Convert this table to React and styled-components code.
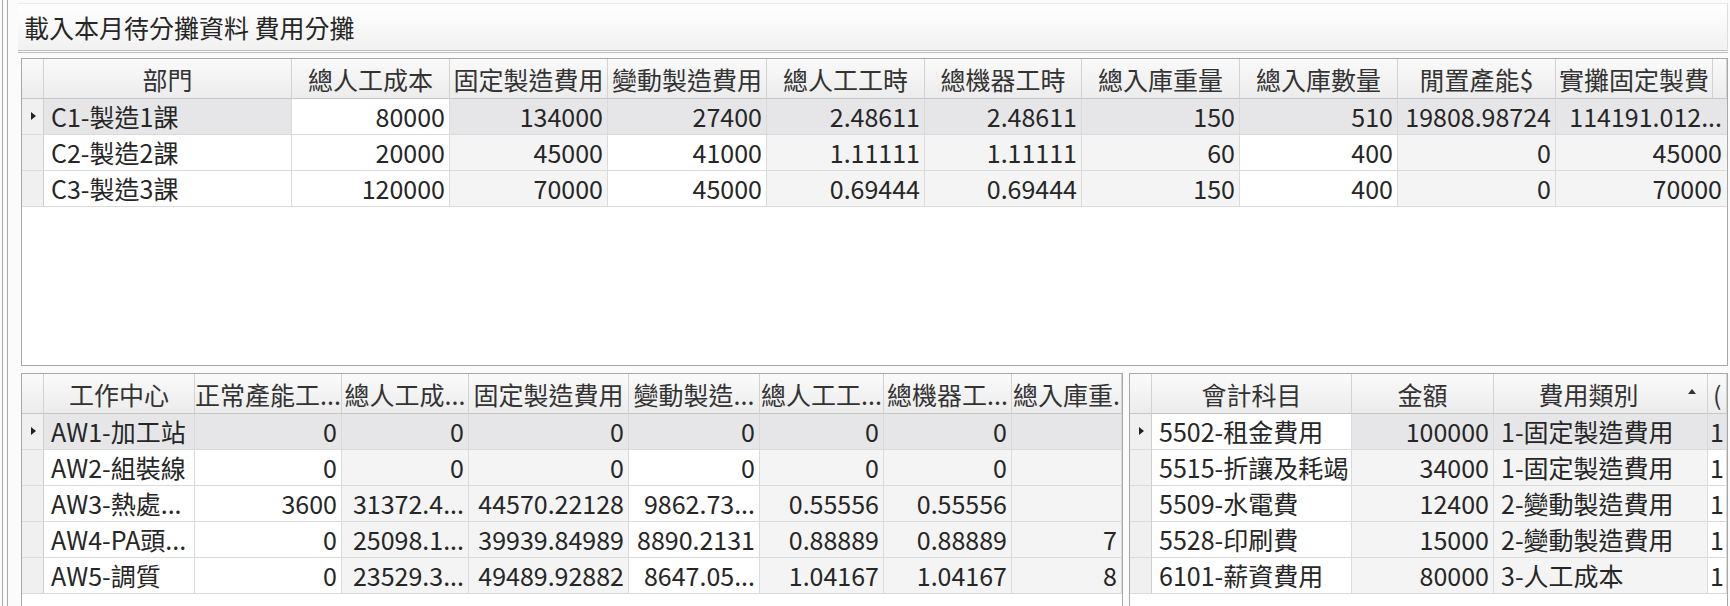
import React from "react";
import styled, { createGlobalStyle } from "styled-components";

const GlobalStyle = createGlobalStyle`
  html, body {
    margin: 0;
    padding: 0;
    background: #fbfbfb;
  }
  body {
    font-family: "Noto Sans CJK TC", "Noto Sans", sans-serif;
    color: #262626;
  }
`;

const Window = styled.div`
  display: flex;
  width: 1730px;
  height: 606px;
  overflow: hidden;
  box-sizing: border-box;
`;

const Rail = styled.div`
  flex: 0 0 4px;
  margin: 0 10px 0 2px;
  border-left: 1px solid #a9a9a9;
  border-right: 1px solid #a9a9a9;
`;

const Main = styled.div`
  flex: 1;
  display: flex;
  flex-direction: column;
  padding: 3px 2px 0 0;
  min-width: 0;
`;

const TitleBar = styled.div`
  height: 50px;
  box-sizing: border-box;
  display: flex;
  align-items: center;
  padding-left: 6px;
  font-size: 25px;
  color: #262626;
  background: linear-gradient(#ffffff, #f1f1f1);
  border-top: 1px solid #ececec;
  border-right: 1px solid #dcdcdc;
  border-bottom: 3px double #bdbdbd;
`;

const GridFrame = styled.div`
  box-sizing: border-box;
  margin-left: 3px;
  border: 1px solid #a8a8a8;
  background: #fff;
  overflow: hidden;
  height: ${({ $height }) => ($height ? `${$height}px` : "auto")};
  flex: ${({ $grow }) => ($grow ? 1 : "none")};
  width: ${({ $width }) => ($width ? `${$width}px` : "auto")};
  min-width: 0;
`;

const TopFrame = styled(GridFrame)`
  margin-top: 5px;
`;

const BottomRow = styled.div`
  display: flex;
  gap: 6px;
  margin: 7px 0 0 3px;
  flex: 1;
  min-height: 0;

  & > ${GridFrame} {
    margin-left: 0;
    border-bottom: none;
  }
`;

const Row = styled.div`
  display: grid;
  grid-template-columns: ${({ $cols }) => $cols};
  height: ${({ $head }) => ($head ? 40 : 36)}px;
  box-sizing: border-box;
`;

const HeadCell = styled.div`
  display: flex;
  align-items: center;
  box-sizing: border-box;
  height: 40px;
  padding: 0 1px;
  font-size: 25px;
  color: #333;
  background: linear-gradient(#fafafa, #ececec);
  border-right: 1px solid #d2d2d2;
  border-bottom: 1px solid #c6c6c6;
  overflow: hidden;
  white-space: nowrap;
  justify-content: ${({ $left }) => ($left ? "flex-start" : "center")};

  span {
    flex: 1;
    text-align: ${({ $left }) => ($left ? "left" : "center")};
    padding-left: ${({ $left }) => ($left ? "4px" : "0")};
  }
`;

const SortArrow = styled.i`
  flex: 0 0 auto;
  width: 0;
  height: 0;
  margin: 0 10px 4px 6px;
  border-left: 4px solid transparent;
  border-right: 4px solid transparent;
  border-bottom: 5px solid #333;
`;

const RowHead = styled.div`
  position: relative;
  box-sizing: border-box;
  background: #f0f0f0;
  border-right: 1px solid #cfcfcf;
  border-bottom: 1px solid #dcdcdc;

  &::after {
    content: "";
    display: ${({ $current }) => ($current ? "block" : "none")};
    position: absolute;
    left: 9px;
    top: 13px;
    border-top: 4px solid transparent;
    border-bottom: 4px solid transparent;
    border-left: 5px solid #222;
  }
`;

const Cell = styled.div`
  box-sizing: border-box;
  padding: ${({ $tight }) => ($tight ? "0 0 0 2px" : "0 4px 0 7px")};
  font-size: 25px;
  line-height: 35px;
  color: #262626;
  white-space: nowrap;
  overflow: hidden;
  text-align: ${({ $align }) => $align};
  background: ${({ $bg }) => $bg};
  border-right: 1px solid ${({ $last }) => ($last ? "transparent" : "#dadada")};
  border-bottom: 1px solid #dadada;
  grid-column: ${({ $span }) => ($span ? `span ${$span}` : "auto")};
`;

const SELECTED = "#e6e6e8";
const READONLY = "#f4f4f4";

function cellBg(rowIdx, colIdx, col, focus) {
  if (rowIdx === 0) return colIdx === focus ? "#ffffff" : SELECTED;
  return col.ro ? READONLY : "#ffffff";
}

function DataGrid({ cols, columns, rows, focus = -1, spanLast, sortCol }) {
  return (
    <>
      <Row $cols={cols} $head>
        <HeadCell />
        {columns.map((c, i) => (
          <HeadCell key={i} $left={c.headLeft}>
            <span>{c.title}</span>
            {sortCol === i && <SortArrow />}
          </HeadCell>
        ))}
        {spanLast && <HeadCell />}
      </Row>
      {rows.map((r, ri) => (
        <Row $cols={cols} key={ri}>
          <RowHead $current={ri === 0} />
          {r.map((v, ci) => {
            const last = ci === r.length - 1;
            return (
              <Cell
                key={ci}
                $align={columns[ci].align}
                $tight={columns[ci].tight}
                $bg={cellBg(ri, ci, columns[ci], focus)}
                $span={spanLast && last ? 2 : 0}
                $last={spanLast && last}
              >
                {v}
              </Cell>
            );
          })}
        </Row>
      ))}
    </>
  );
}

const topCols = "22px 248px 158px 158px 159px 158px 157px 158px 158px 158px 157px 1fr";
const topColumns = [
  { title: "部門", align: "left" },
  { title: "總人工成本", align: "right" },
  { title: "固定製造費用", align: "right", ro: true },
  { title: "變動製造費用", align: "right" },
  { title: "總人工工時", align: "right", ro: true },
  { title: "總機器工時", align: "right", ro: true },
  { title: "總入庫重量", align: "right", ro: true },
  { title: "總入庫數量", align: "right" },
  { title: "閒置產能$", align: "right", ro: true },
  { title: "實攤固定製費", align: "right", ro: true },
];
const topRows = [
  ["C1-製造1課", "80000", "134000", "27400", "2.48611", "2.48611", "150", "510", "19808.98724", "114191.012..."],
  ["C2-製造2課", "20000", "45000", "41000", "1.11111", "1.11111", "60", "400", "0", "45000"],
  ["C3-製造3課", "120000", "70000", "45000", "0.69444", "0.69444", "150", "400", "0", "70000"],
];

const centerCols = "22px 151px 147px 127px 160px 131px 124px 128px 1fr";
const centerColumns = [
  { title: "工作中心", align: "left" },
  { title: "正常產能工...", align: "right" },
  { title: "總人工成...", align: "right", ro: true },
  { title: "固定製造費用", align: "right", ro: true },
  { title: "變動製造...", align: "right" },
  { title: "總人工工...", align: "right", ro: true },
  { title: "總機器工...", align: "right", ro: true },
  { title: "總入庫重.", align: "right", ro: true },
];
const centerRows = [
  ["AW1-加工站", "0", "0", "0", "0", "0", "0", ""],
  ["AW2-組裝線", "0", "0", "0", "0", "0", "0", ""],
  ["AW3-熱處...", "3600", "31372.4...", "44570.22128", "9862.73...", "0.55556", "0.55556", ""],
  ["AW4-PA頭...", "0", "25098.1...", "39939.84989", "8890.2131", "0.88889", "0.88889", "7"],
  ["AW5-調質", "0", "23529.3...", "49489.92882", "8647.05...", "1.04167", "1.04167", "8"],
];

const accountCols = "22px 200px 142px 214px 1fr";
const accountColumns = [
  { title: "會計科目", align: "left" },
  { title: "金額", align: "right", ro: true },
  { title: "費用類別", align: "left", ro: true },
  { title: "(", align: "left", headLeft: true, tight: true },
];
const accountRows = [
  ["5502-租金費用", "100000", "1-固定製造費用", "1"],
  ["5515-折讓及耗竭", "34000", "1-固定製造費用", "1"],
  ["5509-水電費", "12400", "2-變動製造費用", "1"],
  ["5528-印刷費", "15000", "2-變動製造費用", "1"],
  ["6101-薪資費用", "80000", "3-人工成本", "1"],
];

export default function App() {
  return (
    <>
      <GlobalStyle />
      <Window>
        <Rail />
        <Main>
          <TitleBar>載入本月待分攤資料 費用分攤</TitleBar>
          <TopFrame $height={308}>
            <DataGrid cols={topCols} columns={topColumns} rows={topRows} focus={1} spanLast />
          </TopFrame>
          <BottomRow>
            <GridFrame $width={1102}>
              <DataGrid cols={centerCols} columns={centerColumns} rows={centerRows} />
            </GridFrame>
            <GridFrame $grow>
              <DataGrid cols={accountCols} columns={accountColumns} rows={accountRows} focus={0} sortCol={2} />
            </GridFrame>
          </BottomRow>
        </Main>
      </Window>
    </>
  );
}
